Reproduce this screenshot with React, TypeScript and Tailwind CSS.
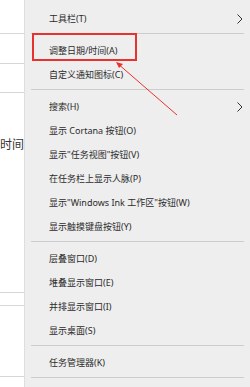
import React from "react";

const font = { fontFamily: '"Noto Sans", "Noto Sans CJK SC", sans-serif' };

function Item({ label, arrow }: { label: string; arrow?: boolean }) {
  return (
    <div className="relative flex h-[24px] shrink-0 items-center pl-[24px] text-[9px] leading-none text-[#2b2b2b] whitespace-nowrap">
      <span>{label}</span>
      {arrow && (
        <svg className="absolute right-[7px] top-[8px]" width="6" height="10" viewBox="0 0 6 10">
          <polyline points="0.5,0.5 5,5 0.5,9.5" fill="none" stroke="#333" strokeWidth="1" />
        </svg>
      )}
    </div>
  );
}

function Sep() {
  return (
    <div className="h-[8px] shrink-0 px-[6px] pt-[3px]">
      <div className="h-px bg-[#cdcdcd]" />
    </div>
  );
}

export default function App() {
  return (
    <div className="relative flex h-[387px] w-[250px] overflow-hidden bg-white" style={font}>
      <div className="flex w-[24px] shrink-0 flex-col">
        <div className="h-[34px] shrink-0 border-b border-[#d6d6d6]" />
        <div className="h-[30px] shrink-0 border-b border-[#d6d6d6]" />
        <div className="h-[29px] shrink-0 border-b border-[#d6d6d6]" />
        <div className="flex h-[200px] shrink-0 justify-end overflow-hidden border-b border-[#d6d6d6] pt-[45px]">
          <span className="whitespace-nowrap text-[12px] leading-[14px] text-[#333]">时间</span>
        </div>
        <div className="h-[13px] shrink-0 border-b border-[#d6d6d6]" />
        <div className="h-[71px] shrink-0 border-b border-[#d6d6d6]" />
      </div>
      <div className="relative flex min-w-0 flex-1 flex-col border-l border-[#dedede] bg-[#eeeeee] pt-[6px]">
        <Item label="工具栏(T)" arrow />
        <Sep />
        <Item label="调整日期/时间(A)" />
        <Item label="自定义通知图标(C)" />
        <Sep />
        <Item label="搜索(H)" arrow />
        <Item label="显示 Cortana 按钮(O)" />
        <Item label={'显示"任务视图"按钮(V)'} />
        <Item label="在任务栏上显示人脉(P)" />
        <Item label={'显示"Windows Ink 工作区"按钮(W)'} />
        <Item label="显示触摸键盘按钮(Y)" />
        <Sep />
        <Item label="层叠窗口(D)" />
        <Item label="堆叠显示窗口(E)" />
        <Item label="并排显示窗口(I)" />
        <Item label="显示桌面(S)" />
        <Sep />
        <Item label="任务管理器(K)" />
        <Sep />
        <Item label="锁定所有任务栏(L)" />
        <div className="absolute left-[7px] top-[33px] h-[28px] w-[105px] border-2 border-[#e8322f]" />
      </div>
      <svg className="absolute left-0 top-0" width="250" height="387" viewBox="0 0 250 387">
        <line x1="177" y1="115" x2="117" y2="63" stroke="#e8322f" strokeWidth="1" />
        <polygon points="116,62 123,64 119,68" fill="#e8322f" />
      </svg>
    </div>
  );
}
